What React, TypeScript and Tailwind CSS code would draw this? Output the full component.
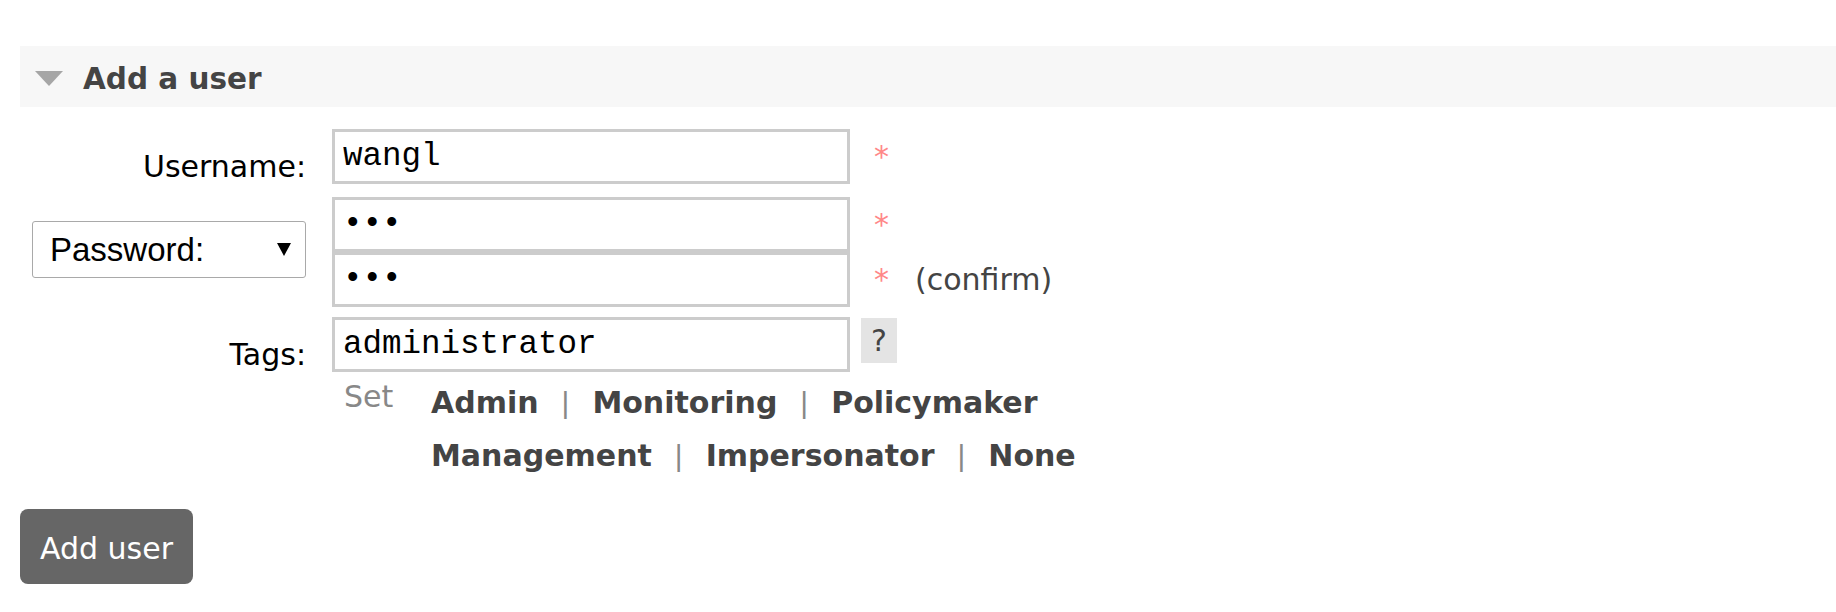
import React from 'react';

// Mandatory-field marker shown to the right of the inputs
const Mand: React.FC = () => (
  <span className="ml-[24px] pt-[10px] text-[30px] leading-[35px] text-[#f88]">*</span>
);

interface TextInputProps {
  value: string;
  type?: string;
}

const TextInput: React.FC<TextInputProps> = ({ value, type = 'text' }) => (
  <input
    readOnly
    type={type}
    value={value}
    className="box-border h-[55px] w-[518px] shrink-0 border-[3px] border-[#ccc] bg-white px-[8px] py-0 font-['Liberation_Mono','Courier_New',monospace] text-[32.5px] text-black outline-none"
  />
);

const LinkRow: React.FC<{ items: string[] }> = ({ items }) => (
  <div className="flex h-[53px] items-baseline gap-x-[23px] leading-[53px]">
    {items.map((t, i) => (
      <React.Fragment key={t}>
        {i > 0 && (
          <span className="font-['Liberation_Sans',Arial,sans-serif] text-[#888]">|</span>
        )}
        <span className="cursor-pointer font-bold text-[#444]">{t}</span>
      </React.Fragment>
    ))}
  </div>
);

const App: React.FC = () => {
  return (
    <div className="min-h-screen bg-white pt-[46px] pl-[20px] font-['DejaVu_Sans',Verdana,sans-serif] text-[30px]">
      {/* Section header */}
      <div className="flex h-[61px] items-center bg-[#f7f7f7] pl-[15px] pt-[4px]">
        <svg width="28" height="15" viewBox="0 0 28 15">
          <polygon points="0,0 28,0 14,15" fill="#a6a6a6" />
        </svg>
        <h2 className="ml-[20px] text-[29.5px] font-bold leading-[34px] text-[#444]">Add a user</h2>
      </div>

      <div className="mt-[22px] grid grid-cols-[286px_1fr] gap-x-[26px]">
        {/* Username */}
        <div className="pt-[20px] text-right leading-[35px] text-black">Username:</div>
        <div className="flex items-start">
          <TextInput value="wangl" />
          <Mand />
        </div>

        {/* Password */}
        <div className="mt-[13px] flex items-center">
          <div className="mb-[5px] ml-[12px] flex h-[57px] w-[274px] items-center justify-between rounded-[3px] border border-[#a9a9a9] bg-white pl-[17px] pr-[14px] font-['Liberation_Sans',Arial,sans-serif] text-[33px] leading-[38px] text-black">
            <span>Password:</span>
            <svg width="14" height="13" viewBox="0 0 14 13">
              <polygon points="0,0 14,0 7,13" fill="#000" />
            </svg>
          </div>
        </div>
        <div className="mt-[13px] flex flex-col">
          <div className="flex items-start">
            <TextInput type="password" value="abc" />
            <Mand />
          </div>
          <div className="flex items-start">
            <TextInput type="password" value="abc" />
            <Mand />
            <span className="ml-[26px] pt-[10px] leading-[35px] text-[#444]">(confirm)</span>
          </div>
        </div>

        {/* Tags */}
        <div className="mt-[10px] pt-[20px] text-right leading-[35px] text-black">Tags:</div>
        <div className="mt-[10px] flex items-start">
          <TextInput value="administrator" />
          <span className="ml-[11px] mt-px flex h-[45px] w-[36px] items-center justify-center bg-[#e4e4e4] leading-[35px] text-[#444]">
            ?
          </span>
        </div>

        <div />
        <div className="mt-[4px] flex">
          <span className="w-[99px] shrink-0 pl-[12px] leading-[41px] text-[#888]">Set</span>
          <div className="flex flex-col">
            <LinkRow items={['Admin', 'Monitoring', 'Policymaker']} />
            <LinkRow items={['Management', 'Impersonator', 'None']} />
          </div>
        </div>
      </div>

      <button className="mt-[27px] h-[75px] w-[173px] rounded-[8px] bg-[#666] pt-[4px] leading-[35px] text-white">
        Add user
      </button>
    </div>
  );
};

export default App;
